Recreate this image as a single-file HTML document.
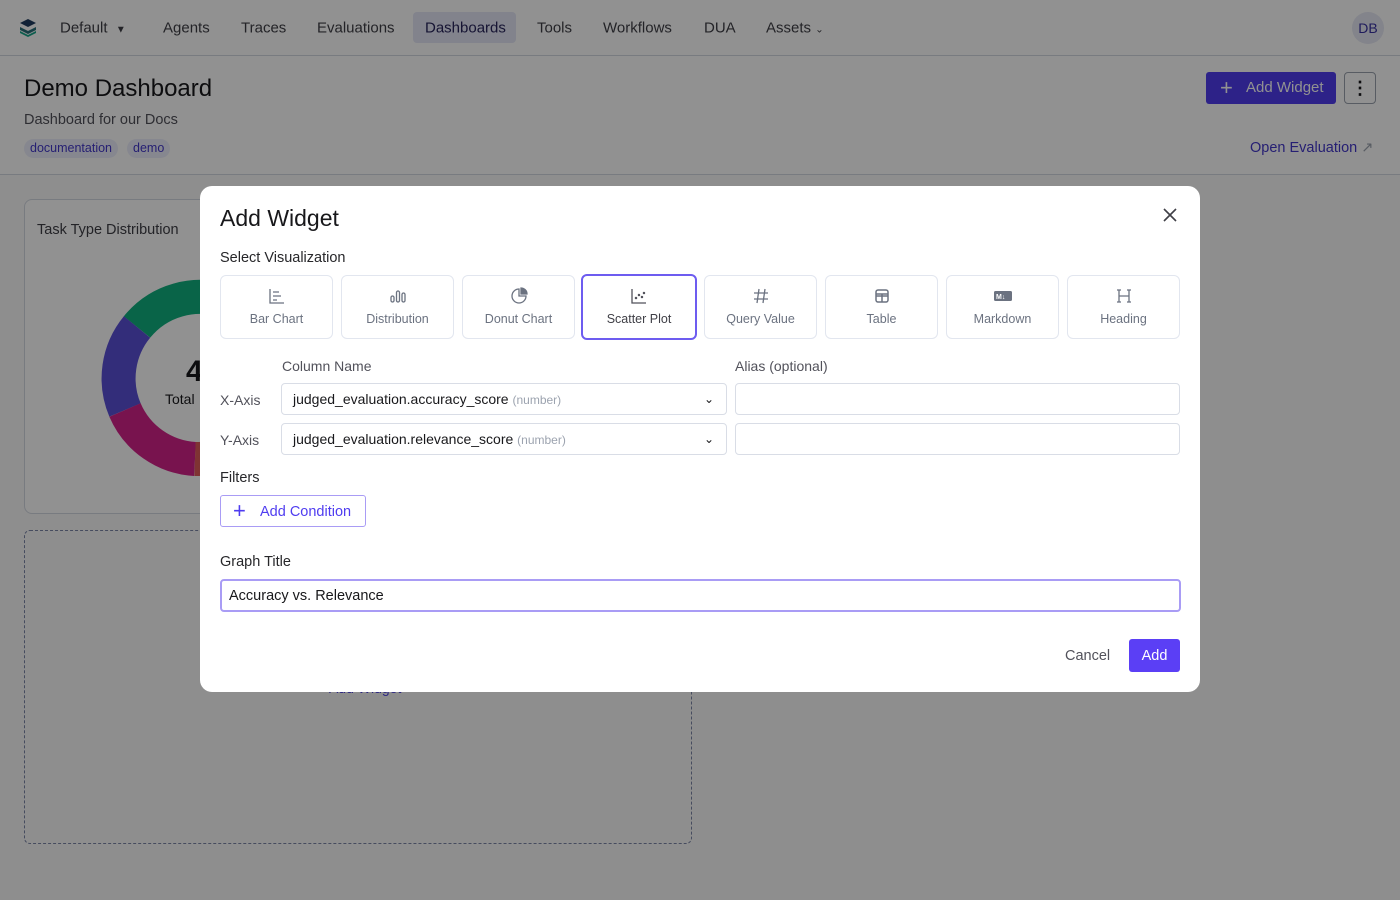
<!DOCTYPE html>
<html><head><meta charset="utf-8"><style>
*{box-sizing:border-box;margin:0;padding:0}
body{width:1400px;height:900px;overflow:hidden;font-family:"Liberation Sans",sans-serif;background:#fafafa;position:relative;color:#18181b}
.top{position:absolute;left:0;top:0;width:1400px;height:56px;background:#fff;border-bottom:1px solid #d4d8e2}
.nav{position:absolute;top:28px;transform:translateY(-50%);font-size:15px;color:#3f3f46}
.abs{position:absolute}
.ov{position:absolute;inset:0;background:rgba(0,0,0,0.43)}
.modal{position:absolute;left:200px;top:186px;width:1000px;height:506px;background:#fff;border-radius:12px}
.vb{position:absolute;top:89px;width:113px;height:64px;border:1px solid #e2e6ef;border-radius:6px;text-align:center;font-size:12.5px;color:#6b7280}
.vb svg{display:block;margin:11px auto 7px}
.sel{position:absolute;height:32px;border:1px solid #d9dde6;border-radius:4px;font-size:14px;line-height:30px;padding-left:11px}
.sel small{font-size:12px;color:#9ca3af}
.lbl{position:absolute;font-size:14px;color:#52525b}
</style></head><body>
<div class="top">
  <svg class="abs" style="left:19px;top:18px" width="18" height="20" viewBox="0 0 18 20"><path d="M9 1 17 5 9 9 1 5Z" fill="#1e3a5f"/><path d="M1 9l8 4 8-4v3l-8 4-8-4Z" fill="#2a6f7a"/><path d="M1 13l8 4 8-4v2l-8 4-8-4Z" fill="#18a58a"/></svg>
  <div class="nav" style="left:60px">Default &nbsp;<span style="font-size:10px">▼</span></div>
  <div class="nav" style="left:163px">Agents</div>
  <div class="nav" style="left:241px">Traces</div>
  <div class="nav" style="left:317px">Evaluations</div>
  <div class="abs" style="left:413px;top:12px;width:103px;height:31px;background:#e4e6f7;border-radius:4px"></div>
  <div class="nav" style="left:425px;color:#27245a">Dashboards</div>
  <div class="nav" style="left:537px">Tools</div>
  <div class="nav" style="left:603px">Workflows</div>
  <div class="nav" style="left:704px">DUA</div>
  <div class="nav" style="left:766px">Assets <span style="font-size:10px">⌄</span></div>
  <div class="abs" style="left:1352px;top:12px;width:32px;height:32px;border-radius:50%;background:#e6e8f4;color:#3730a3;font-size:14px;text-align:center;line-height:32px">DB</div>
</div>
<div class="abs" style="left:0;top:56px;width:1400px;height:119px;background:#fff;border-bottom:1px solid #d4d8e2"></div>
<div class="abs" style="left:24px;top:75px;font-size:24px">Demo Dashboard</div>
<div class="abs" style="left:24px;top:112px;font-size:14.5px;color:#52525b">Dashboard for our Docs</div>
<div class="abs" style="left:24px;top:139px;height:19px;padding:0 6px;border-radius:10px;background:#eceefb;color:#4338ca;font-size:12.5px;line-height:19px">documentation</div>
<div class="abs" style="left:127px;top:139px;height:19px;padding:0 6px;border-radius:10px;background:#eceefb;color:#4338ca;font-size:12.5px;line-height:19px">demo</div>
<div class="abs" style="left:1206px;top:72px;width:130px;height:32px;background:#4f3cf0;border-radius:3px;color:#fff;font-size:15px;line-height:32px;padding-left:40px">Add Widget<span class="abs" style="left:14px;top:0;font-size:22px;font-weight:300">+</span></div>
<div class="abs" style="left:1344px;top:72px;width:32px;height:32px;border:1px solid #9ca3af;border-radius:4px;text-align:center;line-height:30px;font-size:18px;font-weight:bold">⋮</div>
<div class="abs" style="left:1250px;top:140px;font-size:14.5px;color:#4338ca">Open Evaluation <span style="color:#9ca3af">↗</span></div>
<div class="abs" style="left:24px;top:199px;width:400px;height:315px;background:#fff;border:1px solid #d4d8e2;border-radius:8px"></div>
<div class="abs" style="left:37px;top:222px;font-size:14.5px;color:#3f3f46">Task Type Distribution</div>
<svg class="abs" style="left:100px;top:276px" width="200" height="210" viewBox="0 0 200 210">
<g fill="none" stroke-width="34" transform="translate(100,102)">
<path d="M-63 -51 A81 81 0 0 1 81 0" stroke="#10b07f"/>
<path d="M-75 32 A81 81 0 0 1 -63 -51" stroke="#5b4fd6"/>
<path d="M-75 32 A81 81 0 0 0 -5 81" stroke="#d4228a"/>
<path d="M-5 81 A81 81 0 0 0 20 78" stroke="#e05a5a"/>
</g></svg>
<div class="abs" style="left:186px;top:355px;font-size:30px;font-weight:bold">4</div>
<div class="abs" style="left:165px;top:391px;font-size:14px">Total</div>
<div class="abs" style="left:24px;top:530px;width:668px;height:314px;border:1px dashed #7c86a8;border-radius:6px"></div>
<div class="abs" style="left:313px;top:680px;font-size:14px;color:#4f46e5">+ &nbsp;Add Widget</div>
<div class="ov"></div>
<div class="modal">
  <div class="abs" style="left:20px;top:19px;font-size:23px">Add Widget</div>
  <svg class="abs" style="left:963px;top:22px" width="14" height="14"><path d="M1 1 13 13M13 1 1 13" stroke="#3f3f46" stroke-width="1.6"/></svg>
  <div class="abs" style="left:20px;top:64px;font-size:14.5px;color:#27272a">Select Visualization</div>
  <div class="vb" style="left:20px"><svg width="18" height="18" viewBox="0 0 18 18" fill="none" stroke="#6b7280" stroke-width="1.3"><path d="M2 2v14h14M5 5h6M5 9h8M5 13h4"/></svg>Bar Chart</div>
  <div class="vb" style="left:141px"><svg width="18" height="18" viewBox="0 0 18 18" fill="none" stroke="#6b7280" stroke-width="1.3"><rect x="2" y="9" width="3" height="6" rx="1.5"/><rect x="7.5" y="4" width="3" height="11" rx="1.5"/><rect x="13" y="6" width="3" height="9" rx="1.5"/></svg>Distribution</div>
  <div class="vb" style="left:262px"><svg width="18" height="18" viewBox="0 0 18 18" fill="none" stroke="#6b7280" stroke-width="1.3"><path d="M9 2a7 7 0 1 0 7 7H9Z"/><path d="M11 1v6h6a6 6 0 0 0-6-6Z" fill="#6b7280"/></svg>Donut Chart</div>
  <div class="vb" style="left:381px;top:88px;width:116px;height:66px;border:2px solid #6d5cf0;color:#3f3f46"><svg width="18" height="18" viewBox="0 0 18 18" fill="none" stroke="#52525b" stroke-width="1.3"><path d="M2 2v14h14"/><circle cx="6" cy="11" r=".6"/><circle cx="9" cy="8" r=".6"/><circle cx="12" cy="10" r=".6"/><circle cx="14" cy="6" r=".6"/></svg>Scatter Plot</div>
  <div class="vb" style="left:504px"><svg width="18" height="18" viewBox="0 0 18 18" fill="none" stroke="#6b7280" stroke-width="1.3"><path d="M7 2 5 16M13 2l-2 14M2 6h14M2 12h14"/></svg>Query Value</div>
  <div class="vb" style="left:625px"><svg width="18" height="18" viewBox="0 0 18 18" fill="none" stroke="#6b7280" stroke-width="1.5"><rect x="3" y="3" width="12" height="12" rx="2"/><path d="M3 9h12M9 7v8M3 7h12"/></svg>Table</div>
  <div class="vb" style="left:746px"><svg width="20" height="18" viewBox="0 0 20 18"><rect x="1" y="4" width="18" height="10" rx="1.5" fill="#6b7280"/><text x="3" y="12" font-size="7" fill="#fff" font-family="Liberation Sans" font-weight="bold">M↓</text></svg>Markdown</div>
  <div class="vb" style="left:867px"><svg width="18" height="18" viewBox="0 0 18 18" fill="none" stroke="#6b7280" stroke-width="1.3"><path d="M4 3v12M14 3v12M4 9h10M2 3h4M12 3h4M2 15h4M12 15h4"/></svg>Heading</div>
  <div class="lbl" style="left:82px;top:172px">Column Name</div>
  <div class="lbl" style="left:535px;top:172px">Alias (optional)</div>
  <div class="lbl" style="left:20px;top:206px">X-Axis</div>
  <div class="lbl" style="left:20px;top:246px">Y-Axis</div>
  <div class="sel" style="left:81px;top:197px;width:446px">judged_evaluation.accuracy_score <small>(number)</small><span class="abs" style="right:12px;top:0;font-size:12px">⌄</span></div>
  <div class="sel" style="left:81px;top:237px;width:446px">judged_evaluation.relevance_score <small>(number)</small><span class="abs" style="right:12px;top:0;font-size:12px">⌄</span></div>
  <div class="sel" style="left:535px;top:197px;width:445px"></div>
  <div class="sel" style="left:535px;top:237px;width:445px"></div>
  <div class="abs" style="left:20px;top:284px;font-size:14.5px;color:#27272a">Filters</div>
  <div class="abs" style="left:20px;top:309px;width:146px;height:32px;border:1px solid #a99cf5;border-radius:3px;color:#4f3cf0;font-size:14.5px;line-height:32px;padding-left:39px">Add Condition<span class="abs" style="left:12px;top:-1px;font-size:22px;font-weight:300">+</span></div>
  <div class="abs" style="left:20px;top:368px;font-size:14.5px;color:#27272a">Graph Title</div>
  <div class="abs" style="left:20px;top:393px;width:961px;height:33px;border:2px solid #a99cf5;border-radius:4px;font-size:14.5px;line-height:31px;padding-left:7px">Accuracy vs. Relevance</div>
  <div class="abs" style="left:865px;top:462px;font-size:14.5px;color:#52525b">Cancel</div>
  <div class="abs" style="left:929px;top:453px;width:51px;height:33px;background:#5b3ff5;border-radius:3px;color:#fff;font-size:14.5px;line-height:35px;text-align:center">Add</div>
</div>
</body></html>
